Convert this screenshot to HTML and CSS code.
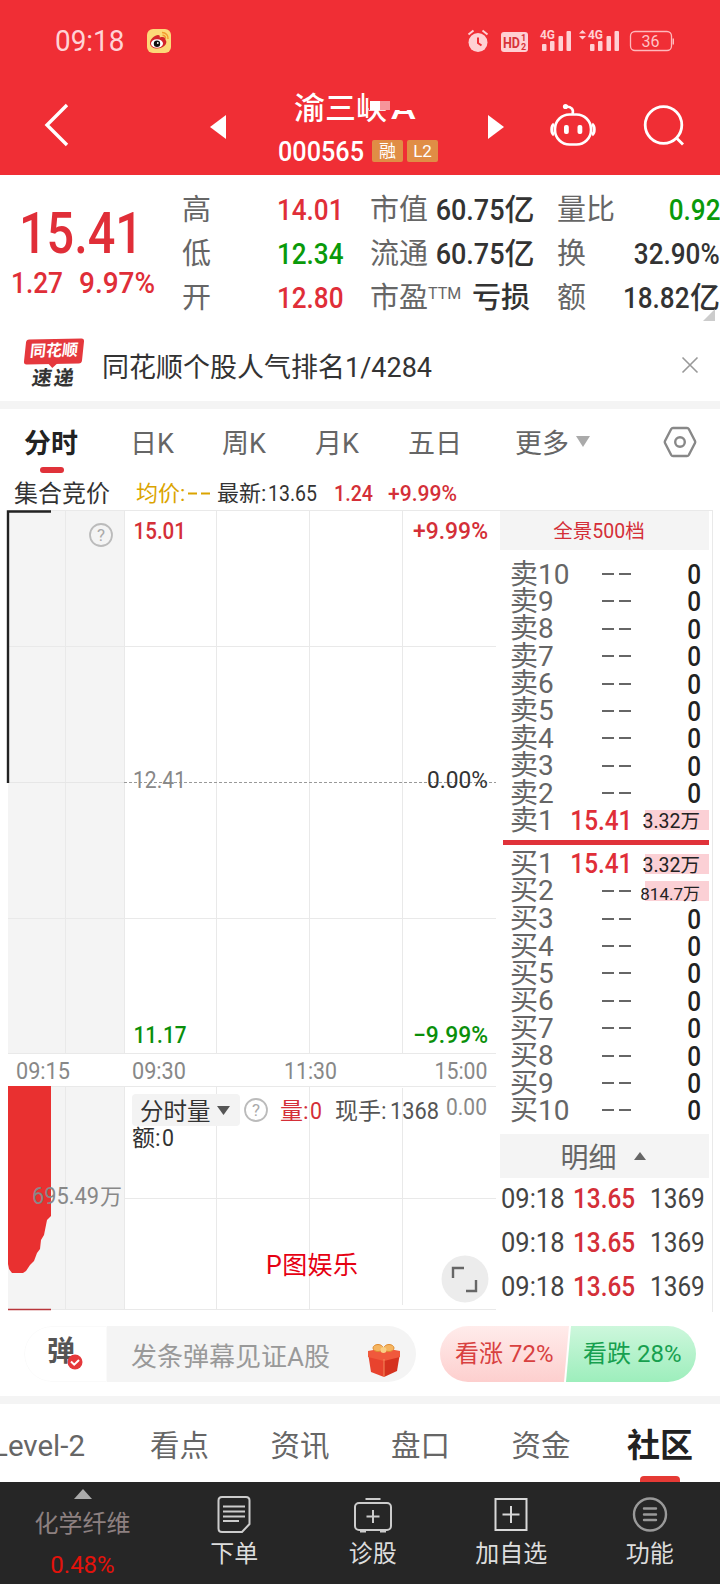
FILE: index.html
```html
<!DOCTYPE html>
<html lang="zh-CN">
<head>
  <meta charset="utf-8">
  <title>渝三峡A 000565</title>
  <meta name="viewport" content="width=device-width, initial-scale=1">
  <link rel="stylesheet" href="styles.css">
</head>
<body>

  <header class="header">
    <div class="status">
      <span class="clock"><span class="din">09:18</span></span>
      <svg class="weibo" width="24" height="24" viewBox="0 0 24 24">
        <rect width="24" height="24" rx="6" fill="#fcd978"/>
        <path d="M3 14c0-4 5-8 8-8 2 0 2 1 1.700 2.500C16 7.500 19 8 18.500 11c2 1 1 8-8 8.500C6 19.500 3 17.500 3 14z" fill="#d3242b"/>
        <ellipse cx="10" cy="14.500" rx="6" ry="4.300" fill="#fff"/>
        <circle cx="10" cy="14.800" r="3.200" fill="#111"/>
        <circle cx="10.800" cy="14" r="0.900" fill="#fff"/>
        <path d="M15 3.500c4 0 6.500 3 6 6.500M15.500 6.300c2 0 3.300 1.300 3 3.200" fill="none" stroke="#f29a2e" stroke-width="1.400"/>
      </svg>
      <svg class="sys" width="208" height="26" viewBox="466 27 208 26">
        <g fill="#ffd0d3">
          <circle cx="478" cy="41.500" r="9.500"/>
          <rect x="501" y="31" width="27" height="20" rx="3"/>
          <rect x="542" y="43" width="4.500" height="7" rx="1"/><rect x="550" y="40" width="4.500" height="10" rx="1"/>
          <rect x="558.500" y="35" width="4.500" height="15" rx="1"/><rect x="566.500" y="30" width="4.500" height="20" rx="1"/>
          <rect x="590" y="43" width="4.500" height="7" rx="1"/><rect x="598" y="40" width="4.500" height="10" rx="1"/>
          <rect x="606.500" y="35" width="4.500" height="15" rx="1"/><rect x="614.500" y="30" width="4.500" height="20" rx="1"/>
          <path d="M579 32.500l3.500-3.500 3.500 3.500zM579 35l3.500 3.500 3.500-3.500z"/>
        </g>
        <path d="M468.500 33.500l5-4M487.500 33.500l-5-4" stroke="#ffd0d3" stroke-width="2"/>
        <path d="M478 36.500v5.500l3.500 2.500" stroke="#f02e35" stroke-width="2" fill="none"/>
        <g class="sys-text">
          <text x="503" y="46.500" font-size="15" textLength="17" lengthAdjust="spacingAndGlyphs" fill="#d8333a">HD</text>
          <text x="521" y="39.500" font-size="9" fill="#d8333a">1</text>
          <text x="521" y="49" font-size="9" fill="#d8333a">2</text>
          <text x="540" y="38" font-size="12.500" textLength="15" lengthAdjust="spacingAndGlyphs" fill="#ffd0d3">4G</text>
          <text x="588" y="38" font-size="12.500" textLength="15" lengthAdjust="spacingAndGlyphs" fill="#ffd0d3">4G</text>
        </g>
        <rect x="630.500" y="30.500" width="41" height="19" rx="4.500" fill="none" stroke="#ffb9bc" stroke-width="1.300"/>
        <path d="M673.300 37.500v6" stroke="#ffb9bc" stroke-width="1.500"/>
        <text class="roboto" x="641.500" y="46" font-size="16" fill="#ffc4c7">36</text>
      </svg>
    </div>

    <div class="navbar">
      <svg class="back" width="28" height="46" viewBox="0 0 28 46"><path d="M24 3L4 23l20 20" fill="none" stroke="#fff" stroke-width="3.400"/></svg>
      <svg class="prev" width="16" height="24" viewBox="0 0 16 24"><path d="M0 12L16 0v24z" fill="#fff"/></svg>
      <div class="stock">
        <div class="stock-name">渝三峡<span class="share-class">A</span><i class="patch"></i><i class="patch-white"></i><i class="patch-pink"></i></div>
        <div class="stock-code">
          <svg width="88" height="24" viewBox="0 0 88 24"><text class="roboto medium" x="1" y="21.500" font-size="28.500" textLength="86" lengthAdjust="spacingAndGlyphs" fill="#fff">000565</text></svg>
          <span class="badge">融</span>
          <span class="badge">L2</span>
        </div>
      </div>
      <svg class="next" width="16" height="24" viewBox="0 0 16 24"><path d="M16 12L0 0v24z" fill="#fff"/></svg>
      <svg class="robot" width="48" height="44" viewBox="549 104 48 44">
        <rect x="555" y="115.500" width="36" height="30" rx="14.500" fill="none" stroke="#fff" stroke-width="2.600"/>
        <path d="M554 125c-3 2-3 9 0 11M592 125c3 2 3 9 0 11" fill="none" stroke="#fff" stroke-width="3"/>
        <path d="M572.500 115c1.500-4.500-1-7.500-6-7.500" fill="none" stroke="#fff" stroke-width="2.600"/>
        <circle cx="565.500" cy="107.500" r="2.600" fill="#fff"/>
        <rect x="564" y="126" width="4.800" height="9" rx="2" fill="#fff"/><rect x="577.500" y="126" width="4.800" height="9" rx="2" fill="#fff"/>
      </svg>
      <svg class="search" width="42" height="42" viewBox="643 105 42 42">
        <circle cx="663.500" cy="126" r="18.300" fill="none" stroke="#fff" stroke-width="2.800"/>
        <path d="M676 138.500l7 7" stroke="#fff" stroke-width="2.800"/>
      </svg>
    </div>
  </header>

  <section class="quote">
    <div class="price">
      <svg width="160" height="110" viewBox="0 190 160 110" class="roboto medium" fill="#e02e38">
        <text x="19" y="252.500" font-size="57" textLength="124" lengthAdjust="spacingAndGlyphs">15.41</text>
        <text x="11" y="293" font-size="30" textLength="52" lengthAdjust="spacingAndGlyphs">1.27</text>
        <text x="79" y="293" font-size="30" textLength="76" lengthAdjust="spacingAndGlyphs">9.97%</text>
      </svg>
    </div>
    <div class="stats">
      <div class="stat"><span>高</span><b class="up"><span class="din">14.01</span></b></div>
      <div class="stat"><span>低</span><b class="down"><span class="din">12.34</span></b></div>
      <div class="stat"><span>开</span><b class="up"><span class="din">12.80</span></b></div>
    </div>
    <div class="stats middle">
      <div class="stat"><span>市值</span><b><span class="din">60.75</span>亿</b></div>
      <div class="stat"><span>流通</span><b><span class="din">60.75</span>亿</b></div>
      <div class="stat"><span>市盈<sup>TTM</sup></span><b class="heavy">亏损</b></div>
    </div>
    <div class="stats last">
      <div class="stat"><span>量比</span><b class="down"><span class="din">0.92</span></b></div>
      <div class="stat"><span>换</span><b><span class="din">32.90%</span></b></div>
      <div class="stat"><span>额</span><b><span class="din">18.82</span>亿</b></div>
    </div>
    <i class="corner"></i>
  </section>

  <section class="news">
    <div class="news-logo">
      <span class="logo-top">同花顺</span>
      <span class="logo-bottom">速递</span>
    </div>
    <p>同花顺个股人气排名1/4284</p>
    <svg width="18" height="18" viewBox="0 0 18 18"><path d="M1.500 1.500l15 15M16.500 1.500l-15 15" stroke="#999" stroke-width="1.600"/></svg>
  </section>

  <nav class="period">
    <span class="active">分时</span>
    <span>日K</span>
    <span>周K</span>
    <span>月K</span>
    <span>五日</span>
    <span>更多<i class="caret"></i></span>
    <svg width="34" height="32" viewBox="0 0 34 32" fill="none" stroke="#888" stroke-width="2.400">
      <path d="M10 2h14q1.200 0 1.800 1L32 15q.5 1 0 2l-6.200 12q-.6 1-1.800 1H10q-1.200 0-1.800-1L2 17q-.5-1 0-2L8.200 3Q8.800 2 10 2z"/>
      <circle cx="17" cy="16" r="4.800"/>
    </svg>
  </nav>

  <div class="summary">
    <svg width="720" height="34" viewBox="0 477 720 34" class="roboto">
      <text x="14" y="502" font-size="24" fill="#333">集合竞价</text>
      <text x="136" y="501" font-size="22" fill="#dba400">均价:</text>
      <path d="M188 493.500h9M201 493.500h9" stroke="#dba400" stroke-width="2"/>
      <text x="217" y="501" font-size="22" fill="#333">最新:</text>
      <text x="268" y="501" font-size="22" fill="#333" textLength="49" lengthAdjust="spacingAndGlyphs">13.65</text>
      <g class="medium" fill="#d42f38" font-size="22">
        <text x="334" y="501" textLength="39" lengthAdjust="spacingAndGlyphs">1.24</text>
        <text x="388" y="501" textLength="69" lengthAdjust="spacingAndGlyphs">+9.99%</text>
      </g>
    </svg>
  </div>

  <main class="board">
    <svg class="chart" width="496" height="802" viewBox="0 510 496 802">
      <!-- call auction area -->
      <rect x="8" y="511" width="116" height="542" fill="#f4f4f4"/>
      <rect x="8" y="1086" width="116" height="224" fill="#f4f4f4"/>
      <!-- grid -->
      <g stroke="#e9e9e9" stroke-width="1">
        <path d="M8 510.500h488M8 646.500h488M8 918.500h488M8 1053.500h488M8 1086.500h488M124 1198.500h372M8 1309.500h488"/>
        <path d="M65.500 511v542M124.500 511v542M216.500 511v542M309.500 511v542M402.500 511v542"/>
        <path d="M65.500 1086v224M124.500 1086v224M216.500 1086v224M309.500 1086v224M402.500 1088v217"/>
      </g>
      <path d="M8 782.500h116" stroke="#e6e6e6"/>
      <path d="M124 782.500h372" stroke="#999" stroke-dasharray="3 2"/>
      <path d="M8 783V511.500h43" fill="none" stroke="#222" stroke-width="2.400"/>
      <!-- auction volume -->
      <path d="M8 1086h43v130l-4 4-3 15-3 5-1 9-3 4-3 8-4 4-4 6-3 2H12l-3-4-1-5z" fill="#e93030"/>
      <path d="M8 1309.500h43" stroke="#b8353b" stroke-width="1.500"/>

      <g fill="none" stroke="#bbb" stroke-width="1.800">
        <circle cx="101" cy="535" r="11"/>
        <circle cx="256" cy="1110" r="11"/>
      </g>
      <g class="roboto" font-size="17" fill="#aaa" text-anchor="middle">
        <text x="101" y="541">?</text>
        <text x="256" y="1116">?</text>
      </g>

      <g class="roboto medium" font-size="23.500">
        <text x="133.500" y="539" textLength="52.500" lengthAdjust="spacingAndGlyphs" fill="#d42f38">15.01</text>
        <text x="413" y="539" textLength="75" lengthAdjust="spacingAndGlyphs" fill="#d42f38">+9.99%</text>
        <text x="133.500" y="1043" textLength="53" lengthAdjust="spacingAndGlyphs" fill="#0a8f0a">11.17</text>
        <text x="413" y="1043" textLength="75" lengthAdjust="spacingAndGlyphs" fill="#0a8f0a">−9.99%</text>
      </g>
      <g class="roboto" font-size="23.500" fill="#888">
        <text x="133" y="788" textLength="53" lengthAdjust="spacingAndGlyphs">12.41</text>
        <text x="427" y="788" textLength="61" lengthAdjust="spacingAndGlyphs" fill="#333">0.00%</text>
        <text x="16" y="1079" textLength="54" lengthAdjust="spacingAndGlyphs">09:15</text>
        <text x="132" y="1079" textLength="54" lengthAdjust="spacingAndGlyphs">09:30</text>
        <text x="284" y="1079" textLength="53" lengthAdjust="spacingAndGlyphs">11:30</text>
        <text x="434.500" y="1079" textLength="53" lengthAdjust="spacingAndGlyphs">15:00</text>
        <text x="32" y="1204" textLength="67" lengthAdjust="spacingAndGlyphs">695.49</text>
        <text x="100" y="1204" font-size="22">万</text>
        <text x="446" y="1115" textLength="41" lengthAdjust="spacingAndGlyphs">0.00</text>
      </g>

      <!-- volume indicator row -->
      <rect x="132" y="1094" width="108" height="32" rx="4" fill="#f3f3f3"/>
      <g class="roboto" font-size="23.500" fill="#333">
        <text x="140" y="1120">分时量</text>
        <path d="M217 1106h13l-6.500 9z" fill="#555"/>
        <text x="280" y="1119" font-size="23" fill="#d42f38">量:</text>
        <text x="310" y="1119" fill="#d42f38" textLength="12" lengthAdjust="spacingAndGlyphs">0</text>
        <text x="335" y="1119" font-size="23" fill="#555">现手:</text>
        <text x="390" y="1119" fill="#555" textLength="49" lengthAdjust="spacingAndGlyphs">1368</text>
        <text x="132" y="1146" font-size="23">额:</text>
        <text x="162" y="1146" textLength="12" lengthAdjust="spacingAndGlyphs">0</text>
        <text x="266" y="1274" font-size="25" fill="#e60012" textLength="92">P图娱乐</text>
      </g>
      <circle cx="465" cy="1279" r="23.500" fill="#ececec"/>
      <path d="M453 1278v-10h11M466 1291h10v-11" fill="none" stroke="#666" stroke-width="2.400"/>
    </svg>

    <aside class="book">
      <div class="book-head">全景500档</div>
      <div class="levels">
        <div class="level"><span>卖10</span><i></i><b>0</b></div>
        <div class="level"><span>卖9</span><i></i><b>0</b></div>
        <div class="level"><span>卖8</span><i></i><b>0</b></div>
        <div class="level"><span>卖7</span><i></i><b>0</b></div>
        <div class="level"><span>卖6</span><i></i><b>0</b></div>
        <div class="level"><span>卖5</span><i></i><b>0</b></div>
        <div class="level"><span>卖4</span><i></i><b>0</b></div>
        <div class="level"><span>卖3</span><i></i><b>0</b></div>
        <div class="level"><span>卖2</span><i></i><b>0</b></div>
        <div class="level"><span>卖1</span><em class="din">15.41</em><b class="vol">3.32万</b></div>
      </div>
      <div class="divider"></div>
      <div class="levels buy">
        <div class="level"><span>买1</span><em class="din">15.41</em><b class="vol">3.32万</b></div>
        <div class="level"><span>买2</span><i></i><b class="vol small">814.7万</b></div>
        <div class="level"><span>买3</span><i></i><b>0</b></div>
        <div class="level"><span>买4</span><i></i><b>0</b></div>
        <div class="level"><span>买5</span><i></i><b>0</b></div>
        <div class="level"><span>买6</span><i></i><b>0</b></div>
        <div class="level"><span>买7</span><i></i><b>0</b></div>
        <div class="level"><span>买8</span><i></i><b>0</b></div>
        <div class="level"><span>买9</span><i></i><b>0</b></div>
        <div class="level"><span>买10</span><i></i><b>0</b></div>
      </div>
      <div class="detail-head">明细<i></i></div>
      <div class="trade"><span class="din">09:18</span><em class="din">13.65</em><b class="din">1369</b></div>
      <div class="trade"><span class="din">09:18</span><em class="din">13.65</em><b class="din">1369</b></div>
      <div class="trade"><span class="din">09:18</span><em class="din">13.65</em><b class="din">1369</b></div>
    </aside>
  </main>

  <section class="danmu">
    <div class="danmu-input">
      <div class="danmu-switch">弹
        <svg class="check" width="16" height="16" viewBox="0 0 16 16"><circle cx="8" cy="8" r="7.500" fill="#e5383b"/><path d="M4 7.500l3.200 3.200L12 6" fill="none" stroke="#fff" stroke-width="2"/></svg>
      </div>
      <div class="danmu-text">发条弹幕见证A股
        <svg width="34" height="36" viewBox="0 0 34 36">
          <path d="M1 11l16 5v19L4 30z" fill="#e8432e"/>
          <path d="M33 11l-16 5v19l13-6z" fill="#d5321f"/>
          <path d="M1 9l16-3 16 3v6l-16 4L1 15z" fill="#f0593c"/>
          <path d="M17 17v18" stroke="#f58a5b" stroke-width="1"/>
          <ellipse cx="11" cy="6" rx="5" ry="3.500" fill="#f5b560" stroke="#e08c30"/>
          <ellipse cx="22" cy="6" rx="5" ry="3.500" fill="#f5b560" stroke="#e08c30"/>
          <circle cx="16.500" cy="8" r="3" fill="#f9cf85"/>
        </svg>
      </div>
    </div>
    <div class="vote">
      <div class="vote-up">看涨 72%</div>
      <div class="vote-down">看跌 28%</div>
    </div>
  </section>

  <nav class="tabs">
    <span class="level2">Level-2</span>
    <span>看点</span>
    <span>资讯</span>
    <span>盘口</span>
    <span>资金</span>
    <span class="active">社区</span>
  </nav>

  <footer class="toolbar">
    <div class="sector">
      <i></i>
      <span>化学纤维</span>
      <b>0.48%</b>
    </div>
    <div class="tool">
      <svg width="36" height="38" viewBox="0 0 36 38" fill="none" stroke="#ccc" stroke-width="2">
        <path d="M6 2h24q3.500 0 3.500 3.500V29l-7.500 8H6q-3.500 0-3.500-3.500v-28Q2.500 2 6 2z"/><path d="M7 11.500h22M7 16.500h22M7 21.500h22M7 26h16"/>
      </svg>
      <span>下单</span>
    </div>
    <div class="tool">
      <svg width="40" height="38" viewBox="0 0 40 38" fill="none" stroke="#ccc" stroke-width="2">
        <rect x="2" y="8" width="36" height="27" rx="4"/><path d="M12.500 4h15M7 36.500h6M27 36.500h6M13.500 21.500h13M20 15v13"/>
      </svg>
      <span>诊股</span>
    </div>
    <div class="tool">
      <svg width="36" height="38" viewBox="0 0 36 38" fill="none" stroke="#d8d8d8" stroke-width="2">
        <rect x="2.500" y="4" width="31" height="31"/><path d="M9.500 19.500h17M18 11v17"/>
      </svg>
      <span>加自选</span>
    </div>
    <div class="tool">
      <svg width="36" height="38" viewBox="0 0 36 38" fill="none" stroke="#999" stroke-width="2.400" stroke-linecap="round">
        <circle cx="18" cy="19.500" r="16"/><path d="M12 13.500h12M12 19.500h12M12 25h12"/>
      </svg>
      <span>功能</span>
    </div>
  </footer>

</body>
</html>
```
FILE: styles.css
```css
* {
  box-sizing: border-box;
}

body {
  margin: 0;
  width: 720px;
  height: 1584px;
  overflow: hidden;
  background: #fff;
  color: #333;
  font-family: Roboto, "Noto Sans CJK SC", sans-serif;
}

svg {
  display: block;
  flex: none;
}

b, i, em {
  font-weight: normal;
  font-style: normal;
}

.roboto {
  font-family: Roboto, "Noto Sans CJK SC", sans-serif;
}

.medium {
  font-weight: 500;
}

/* narrow digits */
.din {
  display: inline-block;
  transform: scaleX(0.87);
  transform-origin: right center;
}

/* header */
.header {
  height: 175px;
  background: #f02e35;
  color: #fff;
}

.status {
  display: flex;
  align-items: center;
  height: 80px;
  padding: 1px 46px 0 55px;
}

.clock {
  width: 92px;
  font-size: 29px;
  color: #ffd3d5;
}

.clock .din {
  transform: scaleX(0.96);
  transform-origin: left center;
}

.sys {
  margin-left: auto;
}

.sys-text {
  font-family: Roboto, sans-serif;
  font-weight: 700;
}

.navbar {
  display: flex;
  align-items: center;
  height: 90px;
}

.back {
  margin-left: 43px;
}

.prev {
  margin-top: 3px;
  margin-left: 139px;
}

.stock {
  width: 162px;
  margin-left: 50px;
}

.stock-name {
  position: relative;
  height: 52px;
  padding-left: 18px;
  font-size: 31px;
  line-height: 45px;
  font-weight: 500;
}

.share-class {
  display: inline-block;
  margin-left: 4px;
  transform: scaleX(1.2);
  transform-origin: left center;
}

.patch,
.patch-white,
.patch-pink {
  position: absolute;
  height: 9px;
  top: 15px;
  width: 10px;
}

.patch {
  left: 93px;
  top: 3px;
  width: 52px;
  height: 21px;
  background: #f02e35;
}

.patch-white {
  left: 94px;
  background: #fff;
}

.patch-pink {
  left: 104px;
  background: #f6959a;
}

.stock-code {
  display: flex;
  align-items: center;
  height: 26px;
  padding-left: 1px;
}

.badge {
  height: 22px;
  width: 31px;
  margin-left: 4px;
  border-radius: 2px;
  background: #e08d45;
  font-size: 17px;
  line-height: 22px;
  text-align: center;
}

.badge:first-of-type {
  margin-left: 7px;
}

.next {
  margin-top: 3px;
  margin-left: 50px;
}

.robot {
  margin-left: 45px;
}

.search {
  margin-left: 46px;
}

/* quote */
.quote {
  position: relative;
  display: flex;
  gap: 26px;
  height: 151px;
  padding-top: 13px;
}

.price {
  width: 156px;
  padding-top: 2px;
}

.stats {
  width: 162px;
}

.middle {
  width: 160px;
}

.last {
  width: 163px;
  margin-left: 1px;
}

.stat {
  display: flex;
  justify-content: space-between;
  height: 44px;
  line-height: 44px;
  font-size: 29px;
  white-space: nowrap;
  color: #666;
}

.stat b {
  color: #333;
  font-weight: 500;
  font-size: 30px;
}

.middle .din {
  transform: scaleX(0.9);
}

.stat b.heavy {
  font-size: 29px;
}

.stat b.up {
  color: #e02e38;
}

.stat b.down {
  color: #0a9a0a;
}

.stat sup {
  font-size: 16px;
  line-height: 0;
  vertical-align: 9px;
}

.corner {
  position: absolute;
  right: 5px;
  bottom: 5px;
  border: 6px solid;
  border-color: transparent #ccc #ccc transparent;
}

/* news strip */
.news {
  display: flex;
  align-items: center;
  height: 83px;
  padding: 3px 21px 0 25px;
  border-bottom: 8px solid #f4f4f4;
}

.news-logo {
  width: 58px;
  height: 52px;
  text-align: center;
  font-weight: 700;
}

.logo-top {
  position: relative;
  display: block;
  height: 25px;
  border-radius: 3px;
  background: #e5383d;
  color: #fff;
  font-size: 16px;
  line-height: 24px;
  transform: skew(-6deg, -1deg);
}

.logo-top::after {
  content: "";
  position: absolute;
  left: 24px;
  top: 24px;
  border: 5px solid transparent;
  border-top-color: #e5383d;
  border-bottom: 0;
}

.logo-bottom {
  display: block;
  font-size: 20px;
  line-height: 28px;
  letter-spacing: 2px;
  transform: skewX(-8deg);
}

.news p {
  flex: 1;
  margin: 0 0 0 19px;
  font-size: 27px;
}

/* period tabs */
.period {
  display: flex;
  align-items: center;
  height: 68px;
  padding: 0 23px 4px 24px;
  font-size: 27px;
  color: #666;
}

.period span {
  position: relative;
  width: 93px;
  white-space: nowrap;
}

.period span:first-child {
  width: 106px;
}

.period span:nth-child(2) {
  width: 92px;
}

.period span:nth-child(5) {
  width: 107px;
}

.period span:nth-child(6) {
  display: flex;
  align-items: center;
}

.period svg {
  margin-top: 1px;
  margin-left: auto;
}

.period .active {
  color: #222;
  font-weight: 700;
}

.period .active::after {
  content: "";
  position: absolute;
  left: 16px;
  bottom: -12px;
  width: 24px;
  height: 6px;
  border-radius: 3px;
  background: #e0323a;
}

.caret {
  margin-left: 7px;
  border: 7px solid transparent;
  border-top: 11px solid #aaa;
  border-bottom: 0;
}

.summary {
  height: 33px;
}

/* chart and order book */
.board {
  display: flex;
  height: 802px;
}

.book {
  width: 217px;
  padding: 0 3px 0 4px;
  border-top: 1px solid #e9e9e9;
  border-right: 1px solid #e9e9e9;
}

.book-head {
  height: 39px;
  background: #f4f4f4;
  color: #d42f38;
  font-size: 19.5px;
  line-height: 42px;
  text-align: center;
  padding-right: 11px;
}

.levels {
  padding-top: 10px;
}

.level {
  display: grid;
  grid-template-columns: 62px 65px 1fr;
  align-items: center;
  height: 27.4px;
  padding: 0 0 0 10px;
  font-size: 28px;
  line-height: 27px;
  color: #666;
  white-space: nowrap;
}

.level i {
  justify-self: end;
  width: 29px;
  height: 2px;
  margin-right: 6px;
  background: linear-gradient(90deg, #666 12px, transparent 12px, transparent 17px, #666 17px);
}

.level em {
  justify-self: end;
  margin-right: 5px;
  color: #e02e38;
  font-size: 28px;
  font-weight: 500;
}

.level b {
  padding: 1px 9px 0 0;
  text-align: right;
  color: #222;
  font-size: 28px;
  font-weight: 500;
  transform: scaleX(0.87);
  transform-origin: right center;
}

.level .vol {
  justify-self: end;
  width: 64px;
  height: 20px;
  padding: 0 9px 0 0;
  transform: none;
  background: #fbd0d5;
  font-size: 19.5px;
  line-height: 24px;
  font-weight: 400;
  direction: rtl;
}

.level .small {
  font-size: 17px;
  line-height: 26px;
}

.divider {
  height: 5px;
  margin: 6px 0 5px 3px;
  background: #e0323a;
}

.buy {
  padding-top: 0;
}

.detail-head {
  display: flex;
  align-items: center;
  justify-content: center;
  height: 44px;
  margin-top: 10px;
  padding-right: 3px;
  background: #f4f4f4;
  color: #666;
  font-size: 28px;
}

.detail-head i {
  margin-left: 17px;
  border: 6px solid transparent;
  border-bottom: 8px solid #666;
  border-top: 0;
}

.trade {
  display: flex;
  height: 44px;
  font-size: 28px;
  line-height: 42px;
  color: #444;
}

.trade .din {
  width: 70px;
  transform-origin: left center;
}

.trade span.din {
  margin-left: 1px;
  transform: scaleX(0.91);
}

.trade em {
  margin-left: 2px;
  color: #d42f38;
  font-weight: 500;
}

.trade b {
  margin-left: 7px;
}

/* comment bar */
.danmu {
  display: flex;
  justify-content: space-between;
  height: 92px;
  padding: 14px 24px 0;
  border-bottom: 8px solid #f4f4f4;
}

.danmu-input {
  display: flex;
  width: 392px;
  height: 56px;
  border-radius: 28px;
  overflow: hidden;
}

.danmu-switch {
  position: relative;
  width: 83px;
  padding-left: 22px;
  border: 1px solid #fafafa;
  border-radius: 28px 0 0 28px;
  font-size: 28px;
  font-weight: 700;
  line-height: 50px;
  color: #555;
}

.check {
  position: absolute;
  left: 42px;
  top: 27px;
}

.danmu-text {
  display: flex;
  flex: 1;
  align-items: center;
  justify-content: space-between;
  padding: 0 15px 0 24px;
  background: #f4f4f4;
  color: #999;
  font-size: 26px;
}

.danmu-text svg {
  margin-top: 12px;
}

.vote {
  display: flex;
  width: 256px;
  height: 56px;
  border-radius: 28px;
  overflow: hidden;
  font-size: 24px;
  line-height: 57px;
}

.vote-up {
  width: 129px;
  padding-left: 15px;
  background: linear-gradient(#ffeceb, #fdcfce);
  clip-path: polygon(0 0, 100% 0, 124px 100%, 0 100%);
  color: #d8403f;
}

.vote-down {
  width: 130px;
  margin-left: -3px;
  padding-left: 17px;
  background: linear-gradient(#cdf7dc, #9deebc);
  clip-path: polygon(5px 0, 100% 0, 100% 100%, 0 100%);
  color: #17a04f;
}

/* content tabs */
.tabs {
  display: flex;
  height: 78px;
  font-size: 29.5px;
  line-height: 84px;
  color: #666;
  white-space: nowrap;
}

.tabs span {
  position: relative;
  flex: none;
  width: 120.5px;
}

.tabs .level2 {
  width: 150px;
  text-indent: -8px;
}

.tabs .active {
  margin-left: -5px;
  width: 93px;
  color: #222;
  font-size: 33px;
  font-weight: 700;
}

.tabs .active::after {
  content: "";
  position: absolute;
  left: 13px;
  bottom: 0;
  width: 40px;
  height: 6px;
  border-radius: 4px 4px 0 0;
  background: #e53a35;
}

/* bottom toolbar */
.toolbar {
  display: flex;
  height: 102px;
  background: #262626;
  color: #ddd;
}

.sector {
  display: flex;
  flex-direction: column;
  align-items: center;
  width: 165px;
  padding-top: 7px;
  color: #8d8080;
  font-size: 24px;
}

.sector i {
  border: 9px solid transparent;
  border-bottom: 10px solid #aaa;
  border-top: 0;
}

.sector span {
  line-height: 51px;
}

.sector b {
  color: #e3120b;
  line-height: 30px;
}

.tool {
  display: flex;
  flex-direction: column;
  align-items: center;
  width: 138.5px;
  padding-top: 13px;
  font-size: 24px;
}

.tool span {
  line-height: 43px;
}
```
